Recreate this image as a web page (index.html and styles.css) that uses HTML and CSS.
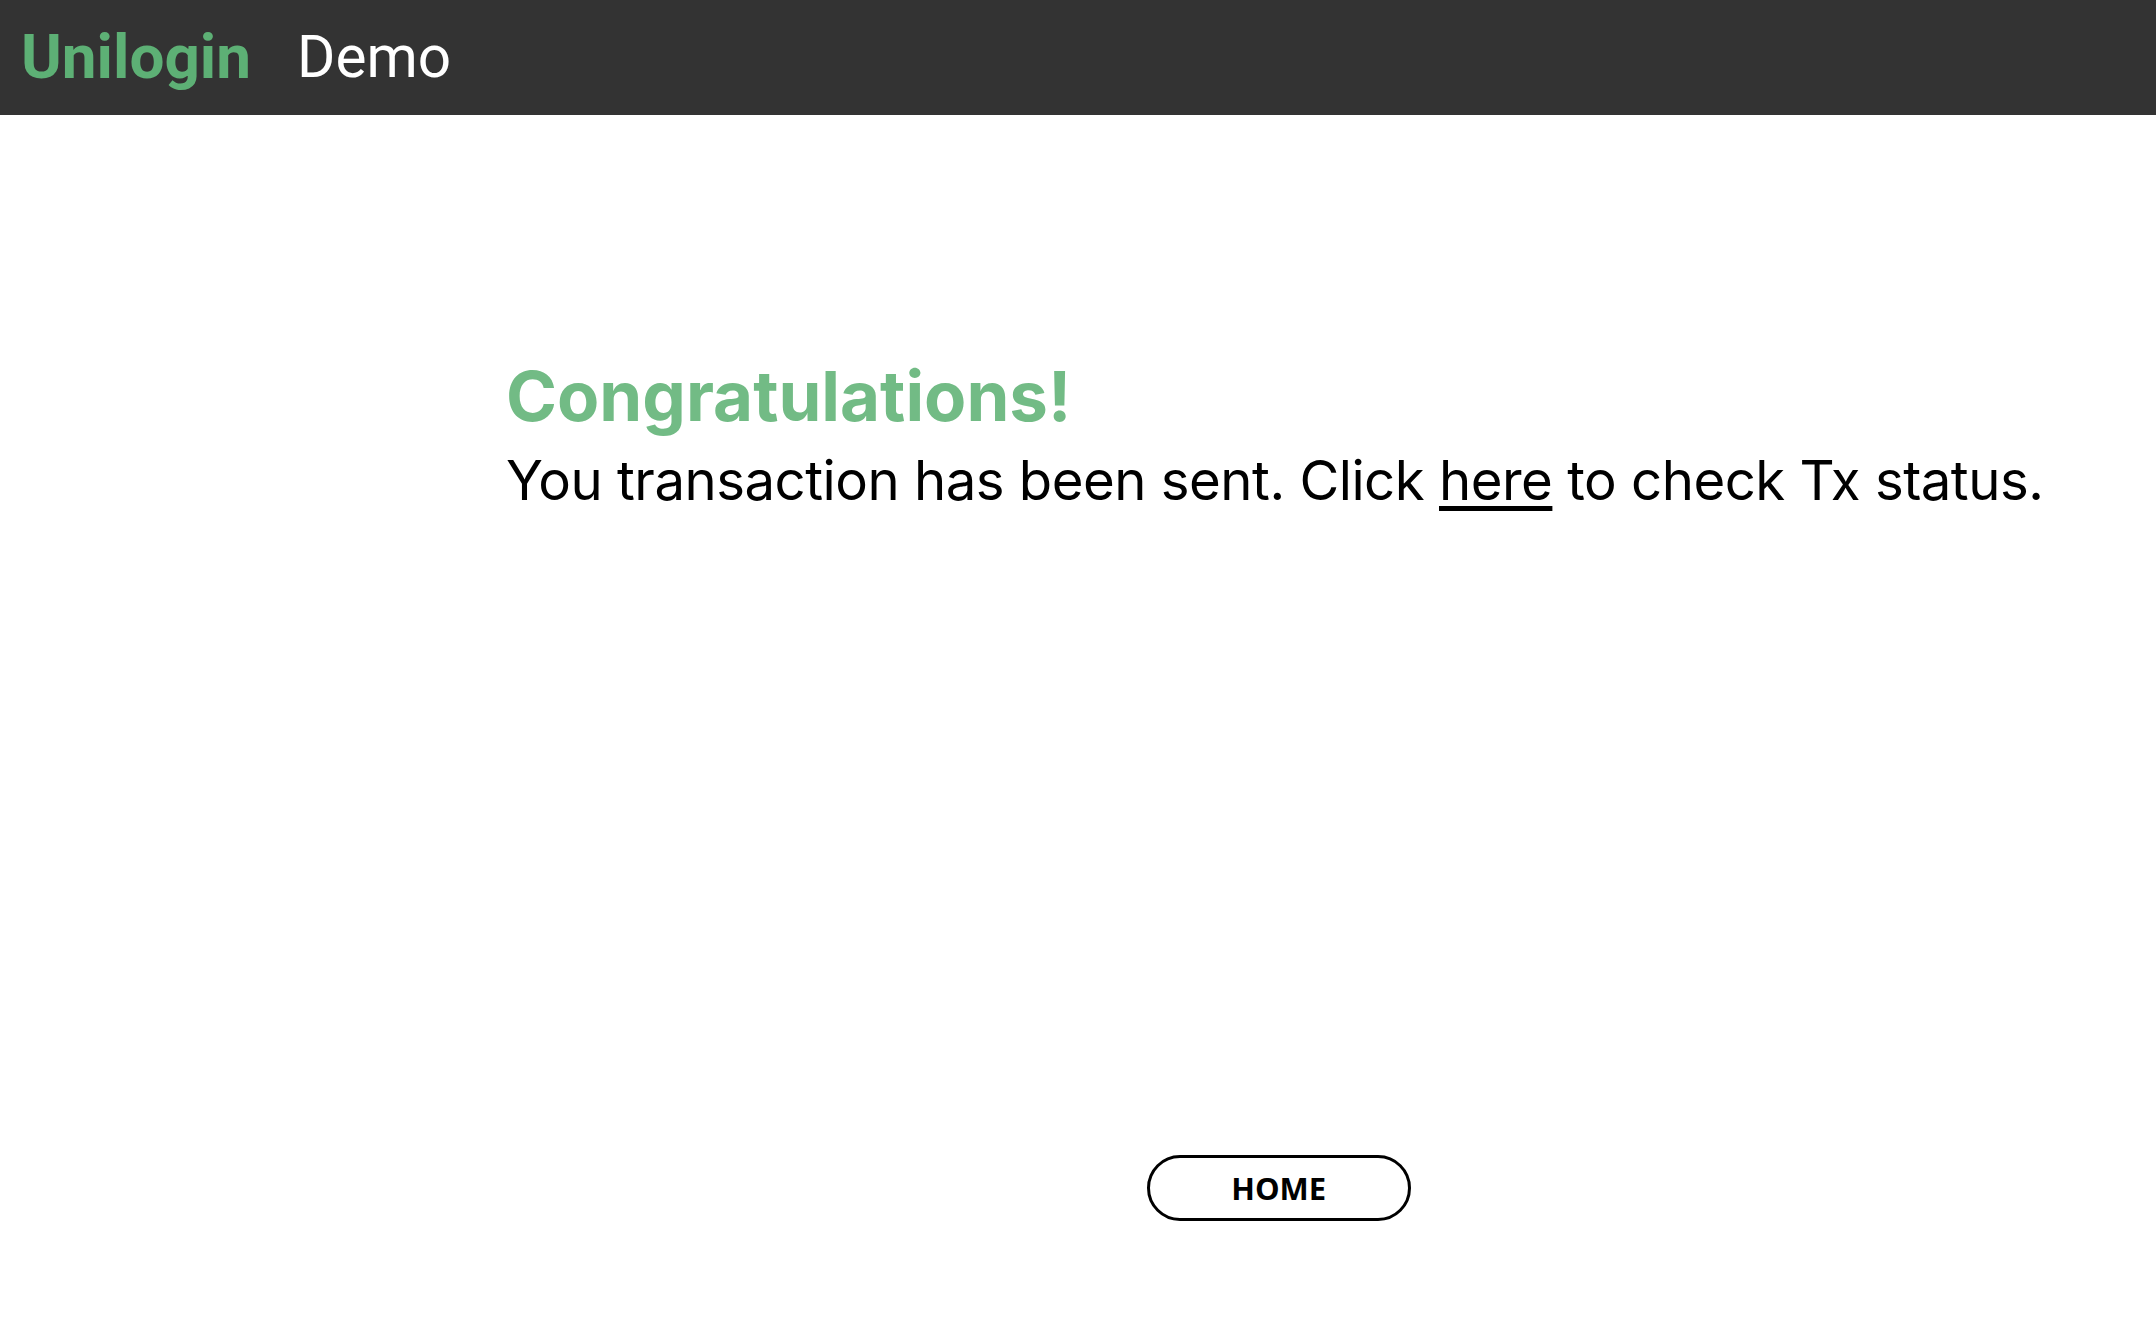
FILE: index.html
```html
<!DOCTYPE html>
<html>
<head>
<meta charset="utf-8">
<link rel="stylesheet" href="styles.css">
</head>
<body>
<header class="topbar">
  <span class="brand">Unilogin</span>
  <span class="demo">Demo</span>
</header>
<main class="main">
  <section class="content">
    <h1 class="title">Congratulations!</h1>
    <p class="message">You transaction has been sent. Click <a class="link" href="#">here</a> to check Tx status.</p>
    <div class="actions">
      <button class="home-btn">HOME</button>
    </div>
  </section>
</main>
</body>
</html>
```
FILE: styles.css
```css
html, body {
  margin: 0;
  padding: 0;
  background: #ffffff;
}
body {
  font-family: Inter, "Noto Sans", sans-serif;
}
.topbar {
  height: 115px;
  background: #333333;
  display: flex;
  align-items: center;
  padding-left: 21px;
  gap: 46px;
  box-sizing: border-box;
  font-family: Roboto, sans-serif;
  padding-bottom: 2px;
}
.brand {
  color: #5db075;
  font-weight: 700;
  font-size: 62px;
}
.demo {
  color: #ffffff;
  font-weight: 400;
  font-size: 58.5px;
}
.main {
  padding-left: 506px;
  padding-top: 241px;
}
.content {
  display: inline-flex;
  flex-direction: column;
}
.title {
  margin: 0 0 4px;
  color: #72bb85;
  font-size: 69px;
  font-weight: 700;
  line-height: 80px;
  letter-spacing: 0;
}
.message {
  margin: 0;
  color: #000;
  font-size: 54.5px;
  line-height: 80px;
  letter-spacing: -0.5px;
}
.link {
  color: #000;
  text-decoration: underline;
  text-decoration-thickness: 5px;
  text-underline-offset: 6px;
}
.actions {
  display: flex;
  justify-content: center;
  margin-top: 635px;
  padding-left: 8px;
}
.home-btn {
  width: 264px;
  height: 66px;
  border: 3px solid #000;
  border-radius: 33px;
  background: #fff;
  font-family: "Open Sans", sans-serif;
  font-weight: 700;
  font-size: 31px;
  color: #000;
  padding: 0;
}
```
